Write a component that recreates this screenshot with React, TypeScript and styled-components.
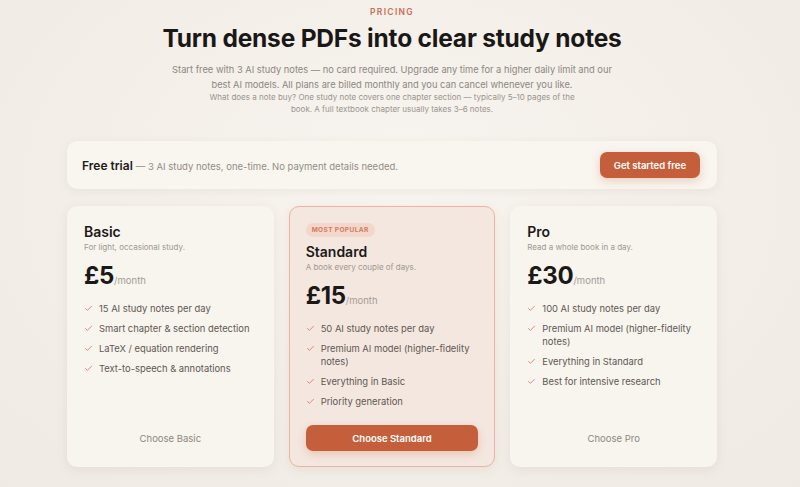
import React from "react";
import styled, { createGlobalStyle } from "styled-components";
import { Check } from "lucide-react";

const GlobalStyle = createGlobalStyle`
  html, body {
    margin: 0;
    padding: 0;
  }
  body {
    font-family: Inter, "Noto Sans", sans-serif;
    background: radial-gradient(ellipse at 50% 40%, #f8f4ef 0%, #f2ede7 70%, #efeae4 100%);
    min-height: 100vh;
    color: #1b1917;
  }
`;

const Page = styled.div`
  width: 784px;
  display: flex;
  flex-direction: column;
  align-items: center;
  padding-top: 7px;
`;

const Eyebrow = styled.div`
  font-size: 8.5px;
  font-weight: 600;
  letter-spacing: 1.3px;
  color: #c96f52;
`;

const Title = styled.h1`
  margin: 6px 0 0;
  font-size: 24.5px;
  font-weight: 700;
  letter-spacing: -0.2px;
  color: #1a1816;
`;

const Lead = styled.p`
  margin: 9px 0 0;
  width: 450px;
  text-align: center;
  font-size: 9.3px;
  line-height: 15px;
  color: #8d8781;
`;

const Note = styled.p`
  margin: 0;
  width: 372px;
  text-align: center;
  font-size: 8px;
  line-height: 11.5px;
  color: #9a948e;
`;

const Content = styled.div`
  width: 650px;
  margin-top: 26px;
  display: flex;
  flex-direction: column;
  gap: 17px;
`;

const TrialBar = styled.div`
  display: flex;
  align-items: center;
  justify-content: space-between;
  height: 48px;
  padding: 0 17px 0 15px;
  border-radius: 10px;
  background: #f9f5ef;
  box-shadow: 0 2px 10px rgba(120, 90, 60, 0.08);
`;

const TrialText = styled.div`
  font-size: 9.5px;
  color: #938d87;
  display: flex;
  align-items: baseline;
  gap: 3px;
`;

const TrialLabel = styled.span`
  font-size: 12px;
  font-weight: 600;
  color: #1e1b19;
`;

const PrimaryButton = styled.button<{ $wide?: boolean }>`
  border: none;
  font-family: inherit;
  cursor: pointer;
  height: 26px;
  padding: 0 14px;
  border-radius: 7px;
  background: #c55f3b;
  color: #fff;
  font-size: 9.5px;
  font-weight: 600;
  box-shadow: 0 3px 8px rgba(197, 95, 59, 0.25);
  width: ${(p) => (p.$wide ? "100%" : "auto")};
`;

const GhostButton = styled.button`
  border: none;
  background: transparent;
  font-family: inherit;
  height: 26px;
  width: 100%;
  font-size: 9.5px;
  color: #8e8882;
  cursor: pointer;
`;

const Grid = styled.div`
  display: grid;
  grid-template-columns: repeat(3, 1fr);
  gap: 15px;
`;

const Card = styled.div<{ $featured?: boolean }>`
  height: 261px;
  box-sizing: border-box;
  display: flex;
  flex-direction: column;
  padding: 16px 16px 15px;
  border-radius: 10px;
  background: ${(p) => (p.$featured ? "#f4e7df" : "#f8f4ee")};
  border: 1px solid ${(p) => (p.$featured ? "#eab3a3" : "transparent")};
  box-shadow: 0 3px 12px rgba(120, 90, 60, 0.09);
`;

const Badge = styled.span`
  align-self: flex-start;
  padding: 3px 6px;
  border-radius: 8px;
  background: #f3d7cc;
  color: #d27b62;
  font-size: 6.5px;
  font-weight: 700;
  letter-spacing: 0.4px;
  margin-bottom: 6px;
`;

const PlanName = styled.h2`
  margin: 0;
  font-size: 14px;
  font-weight: 600;
  line-height: 18px;
  color: #1c1a18;
`;

const Tagline = styled.div`
  font-size: 8px;
  color: #9e9892;
  margin-top: 1px;
`;

const PriceRow = styled.div`
  display: flex;
  align-items: baseline;
  margin-top: 9px;
`;

const Price = styled.span`
  font-size: 24px;
  font-weight: 700;
  letter-spacing: -0.3px;
  color: #1b1917;
`;

const Period = styled.span`
  font-size: 9.5px;
  color: #a39d97;
`;

const Features = styled.ul`
  list-style: none;
  margin: 12px 0 0;
  padding: 0;
  display: flex;
  flex-direction: column;
  gap: 7px;
`;

const Feature = styled.li`
  display: flex;
  align-items: flex-start;
  gap: 6px;
  font-size: 9.4px;
  line-height: 13px;
  color: #5e5853;
`;

const Tick = styled.span`
  display: flex;
  color: #d16a5c;
  padding-top: 2px;
`;

const CardFooter = styled.div`
  margin-top: auto;
`;

type Plan = {
  name: string;
  tagline: string;
  price: string;
  features: string[];
  cta: string;
  featured?: boolean;
};

const plans: Plan[] = [
  {
    name: "Basic",
    tagline: "For light, occasional study.",
    price: "£5",
    features: [
      "15 AI study notes per day",
      "Smart chapter & section detection",
      "LaTeX / equation rendering",
      "Text-to-speech & annotations",
    ],
    cta: "Choose Basic",
  },
  {
    name: "Standard",
    tagline: "A book every couple of days.",
    price: "£15",
    features: [
      "50 AI study notes per day",
      "Premium AI model (higher-fidelity notes)",
      "Everything in Basic",
      "Priority generation",
    ],
    cta: "Choose Standard",
    featured: true,
  },
  {
    name: "Pro",
    tagline: "Read a whole book in a day.",
    price: "£30",
    features: [
      "100 AI study notes per day",
      "Premium AI model (higher-fidelity notes)",
      "Everything in Standard",
      "Best for intensive research",
    ],
    cta: "Choose Pro",
  },
];

export default function App() {
  return (
    <>
      <GlobalStyle />
      <Page>
        <Eyebrow>PRICING</Eyebrow>
        <Title>Turn dense PDFs into clear study notes</Title>
        <Lead>
          Start free with 3 AI study notes — no card required. Upgrade any time
          for a higher daily limit and our best AI models. All plans are billed
          monthly and you can cancel whenever you like.
        </Lead>
        <Note>
          What does a note buy? One study note covers one chapter section —
          typically 5–10 pages of the book. A full textbook chapter usually
          takes 3–6 notes.
        </Note>
        <Content>
          <TrialBar>
            <TrialText>
              <TrialLabel>Free trial</TrialLabel>
              <span>— 3 AI study notes, one-time. No payment details needed.</span>
            </TrialText>
            <PrimaryButton>Get started free</PrimaryButton>
          </TrialBar>
          <Grid>
            {plans.map((plan) => (
              <Card key={plan.name} $featured={plan.featured}>
                {plan.featured && <Badge>MOST POPULAR</Badge>}
                <PlanName>{plan.name}</PlanName>
                <Tagline>{plan.tagline}</Tagline>
                <PriceRow>
                  <Price>{plan.price}</Price>
                  <Period>/month</Period>
                </PriceRow>
                <Features>
                  {plan.features.map((f) => (
                    <Feature key={f}>
                      <Tick>
                        <Check size={9} strokeWidth={2} />
                      </Tick>
                      <span>{f}</span>
                    </Feature>
                  ))}
                </Features>
                <CardFooter>
                  {plan.featured ? (
                    <PrimaryButton $wide>{plan.cta}</PrimaryButton>
                  ) : (
                    <GhostButton>{plan.cta}</GhostButton>
                  )}
                </CardFooter>
              </Card>
            ))}
          </Grid>
        </Content>
      </Page>
    </>
  );
}
